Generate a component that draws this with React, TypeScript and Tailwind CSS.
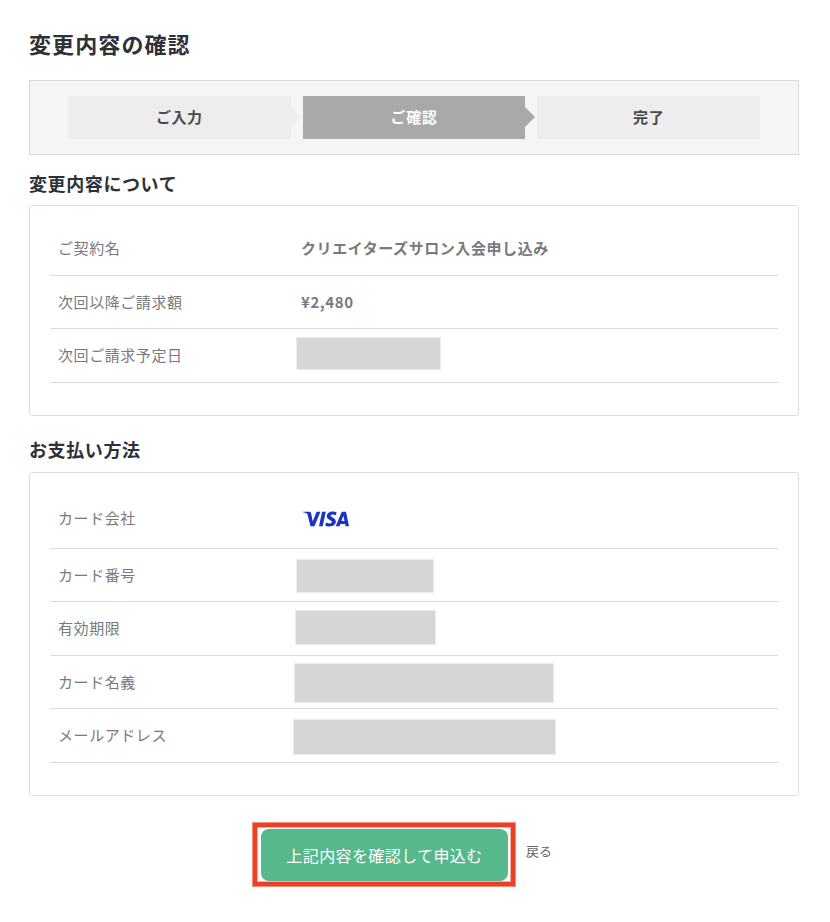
import type { ReactNode } from 'react';
import clsx from 'clsx';
import { SiVisa } from 'react-icons/si';

const steps = [
  { label: 'ご入力', active: false },
  { label: 'ご確認', active: true },
  { label: '完了', active: false },
];

const Steps = () => (
  <ol className="flex h-[75px] gap-3 border border-[#dadada] bg-[#f5f5f5] px-[38px] py-[15px]">
    {steps.map((step, index) => (
      <li
        key={step.label}
        className={clsx(
          'relative flex flex-1 items-center justify-center text-[15px] font-bold tracking-[0.6px]',
          step.active ? 'bg-[#a9a9a9] text-white' : 'bg-[#ededed] text-[#4a4a4a]'
        )}
      >
        {step.label}
        {index < steps.length - 1 && (
          <svg
            className={clsx(
              'absolute left-full top-[11px] h-5 w-2.5',
              step.active ? 'fill-[#a9a9a9]' : 'fill-[#ededed]'
            )}
            viewBox="0 0 10 20"
          >
            <path d="M0 0l10 10L0 20z" />
          </svg>
        )}
      </li>
    ))}
  </ol>
);

const Card = ({ children }: { children: ReactNode }) => (
  <dl className="rounded-[3px] border border-[#dedede] px-5 pt-4 pb-8">{children}</dl>
);

interface RowProps {
  label: string;
  className: string;
  children: ReactNode;
}

const Row = ({ label, className, children }: RowProps) => (
  <div
    className={clsx(
      'flex items-center border-b border-[#dadada] pl-2 text-[15px] tracking-[0.57px] text-[#78797c]',
      className
    )}
  >
    <dt className="w-[243px] shrink-0">{label}</dt>
    <dd className="flex h-full items-center font-bold">{children}</dd>
  </div>
);

const Mask = ({ className }: { className: string }) => (
  <span className={clsx('self-start border border-[#ebebeb] bg-[#d6d6d6]', className)} />
);

const App = () => {
  return (
    <div className="h-[922px] bg-white pt-[27px] pr-[31px] pl-[29px] font-['Noto_Sans_CJK_JP',sans-serif]" lang="ja">
      <h1 className="mb-5 text-[22px] leading-[33px] font-bold tracking-[1.1px] text-[#2e3137]">
        変更内容の確認
      </h1>
      <Steps />

      <h2 className="mt-[15px] mb-2 text-[18px] leading-[27px] font-bold tracking-[0.6px] text-[#2e3137]">
        変更内容について
      </h2>
      <Card>
        <Row label="ご契約名" className="h-[54px]">
          クリエイターズサロン入会申し込み
        </Row>
        <Row label="次回以降ご請求額" className="h-[53px]">
          ¥2,480
        </Row>
        <Row label="次回ご請求予定日" className="h-[54px]">
          <Mask className="mt-2 -ml-[5px] h-[33px] w-[145px]" />
        </Row>
      </Card>

      <h2 className="mt-5 mb-[9px] text-[18px] leading-[27px] font-bold tracking-[0.6px] text-[#2e3137]">
        お支払い方法
      </h2>
      <Card>
        <Row label="カード会社" className="h-[60px]">
          <SiVisa className="ml-[2px] size-[46px] text-[#1a34c6]" />
        </Row>
        <Row label="カード番号" className="h-[53px]">
          <Mask className="mt-2.5 -ml-[5px] h-[34px] w-[138px]" />
        </Row>
        <Row label="有効期限" className="h-[54px]">
          <Mask className="mt-2 -ml-1.5 h-[35px] w-[141px]" />
        </Row>
        <Row label="カード名義" className="h-[53px]">
          <Mask className="mt-[7px] -ml-[7px] h-10 w-[260px]" />
        </Row>
        <Row label="メールアドレス" className="h-[54px]">
          <Mask className="mt-2.5 -ml-2 h-9 w-[263px]" />
        </Row>
      </Card>

      <div className="mt-[26px] ml-[223px] flex">
        <div className="h-[65px] w-[264px] border border-[#f08f7f] px-2 py-1.5 shadow-[inset_0_0_0_4px_#ec4026,inset_0_0_0_5px_#f6aea2]">
          <button
            type="button"
            className="h-[52px] w-[247px] rounded-lg bg-[#56b88b] text-[16px] tracking-[0.4px] text-white"
          >
            上記内容を確認して申込む
          </button>
        </div>
        <a href="#" className="mt-[19px] ml-2.5 text-[13px] leading-5 text-[#666]">
          戻る
        </a>
      </div>
    </div>
  );
};

export default App;
